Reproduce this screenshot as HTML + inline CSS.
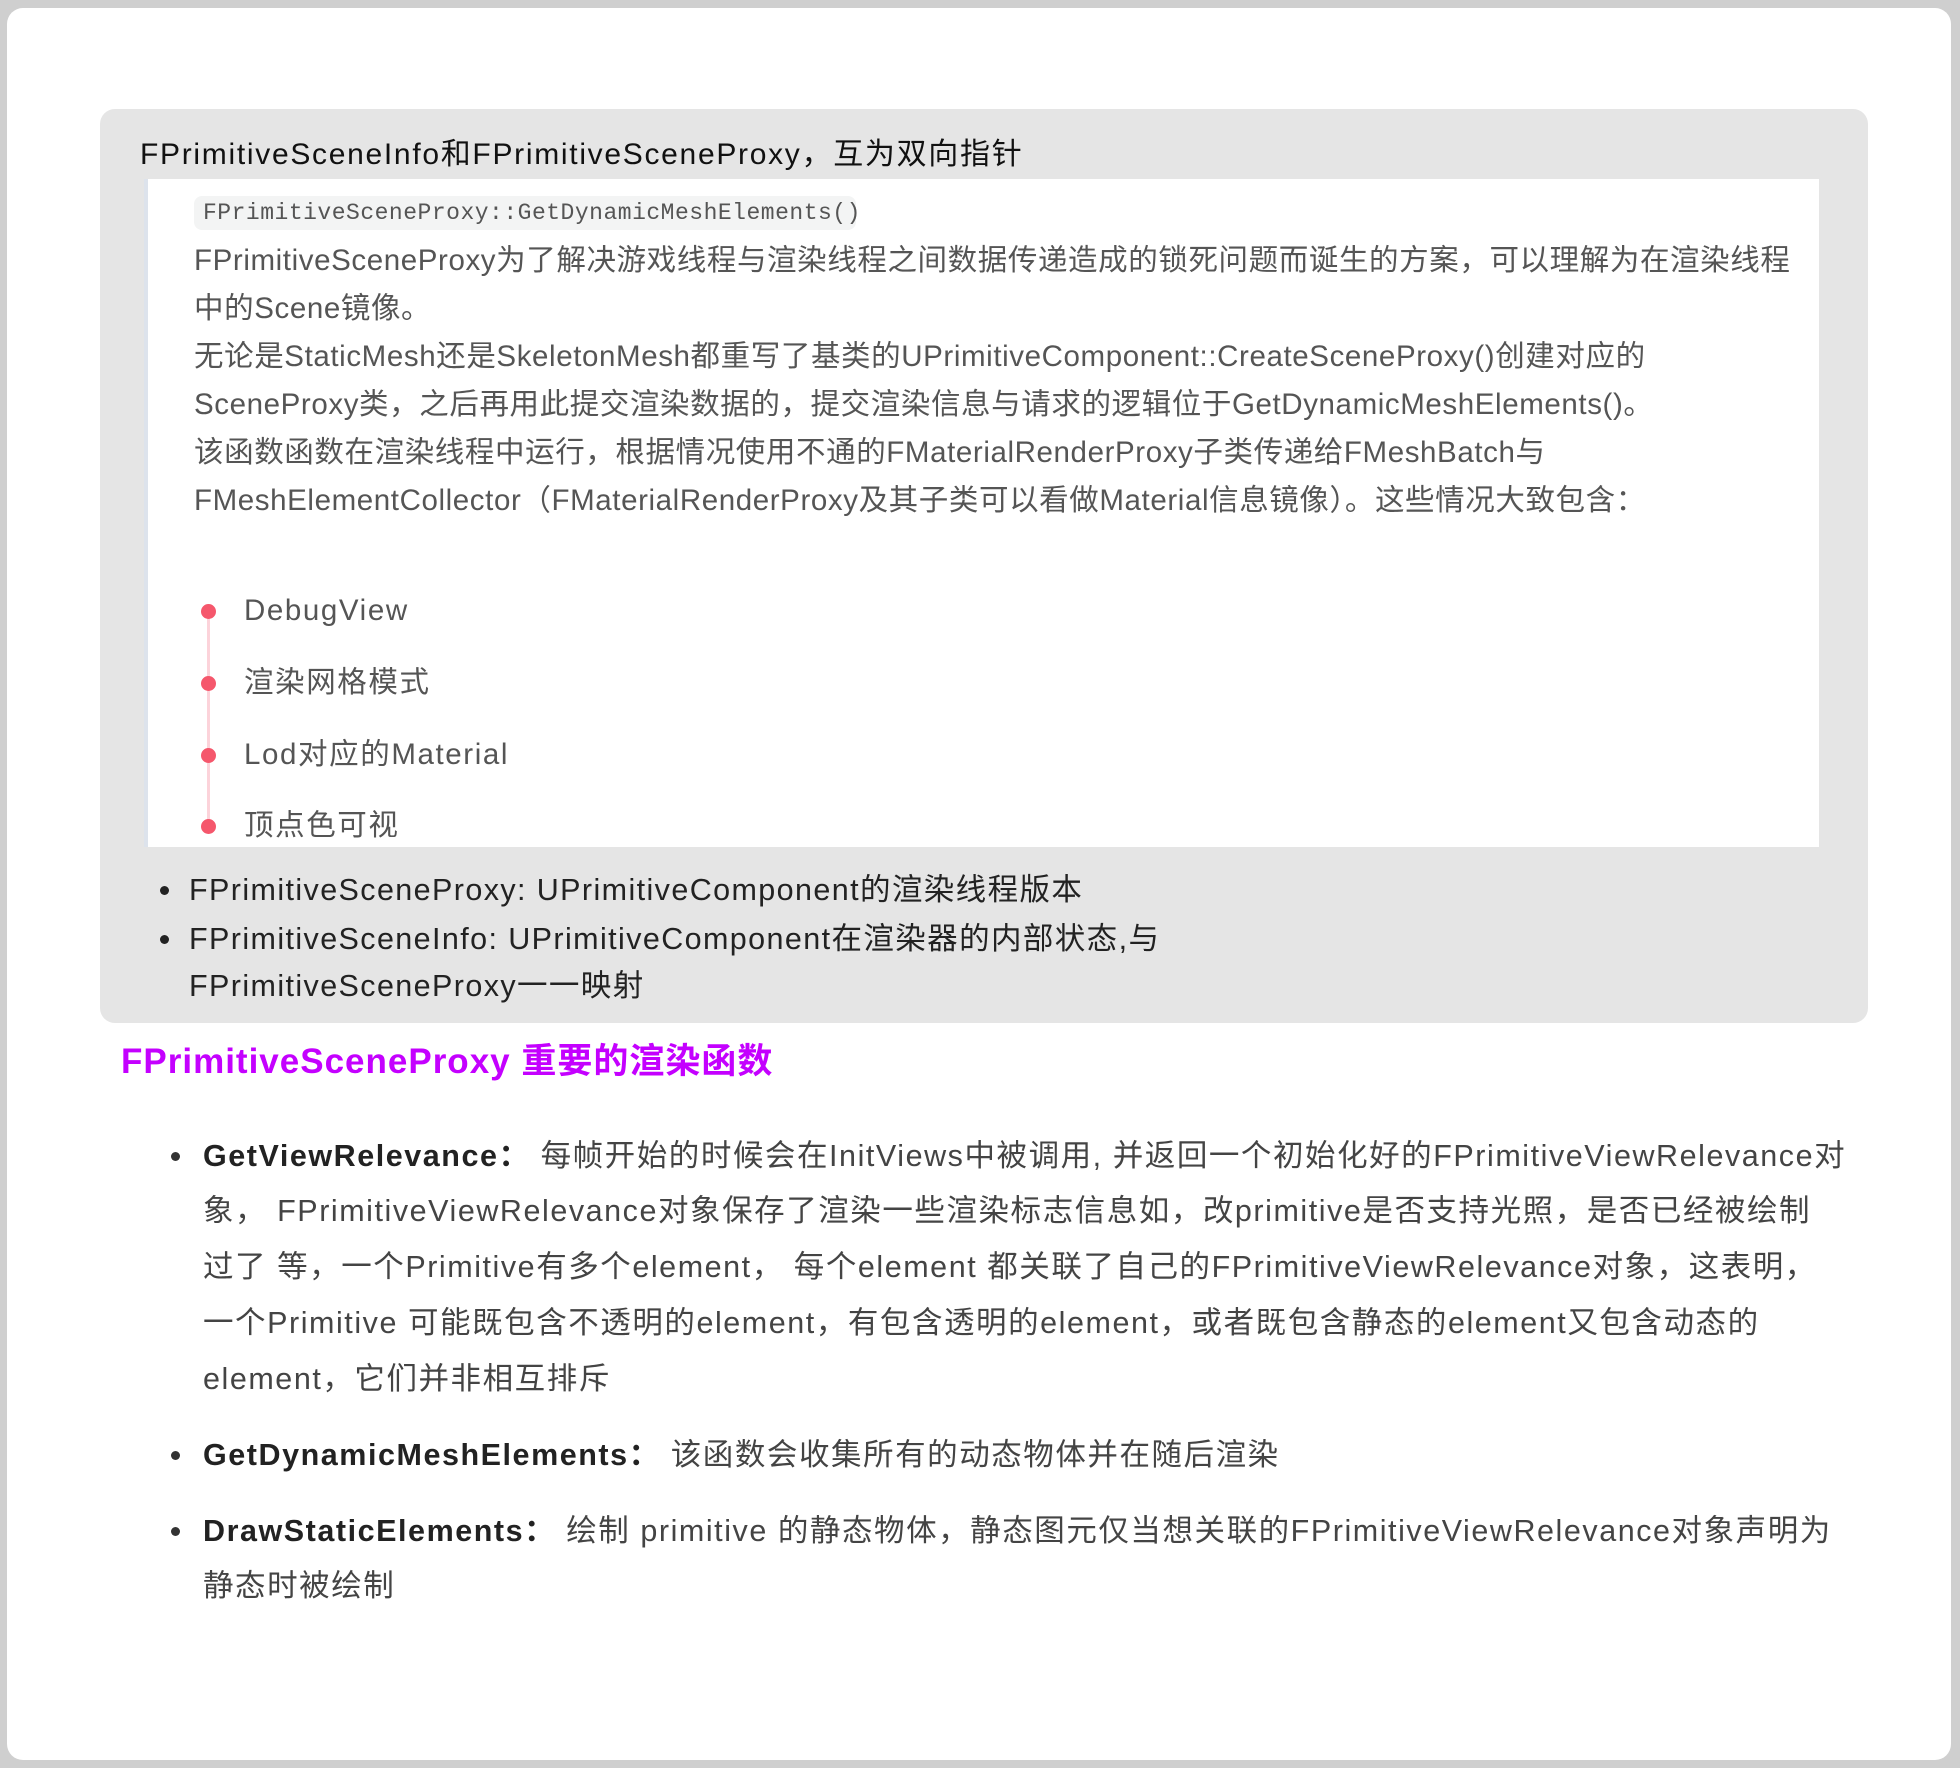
<!DOCTYPE html>
<html><head><meta charset="utf-8"><style>
html,body{margin:0;padding:0;}
body{width:1960px;height:1768px;background:#cfcfcf;position:relative;overflow:hidden;font-family:"Liberation Sans","Noto Sans CJK SC",sans-serif;}
.frame{position:absolute;left:7px;top:8px;width:1944px;height:1752px;background:#fff;border-radius:16px;}
.box{position:absolute;left:100px;top:109px;width:1768px;height:914px;background:#e5e5e5;border-radius:15px;}
.inner{position:absolute;left:144px;top:179px;width:1671px;height:668px;background:#fff;border-left:4px solid #dde3ec;}
.l{position:absolute;white-space:nowrap;}
.code{position:absolute;left:194px;top:196px;width:662px;height:34px;background:#f3f4f4;border-radius:8px;font-family:"Liberation Mono",monospace;font-size:23px;letter-spacing:0.5px;color:#555;line-height:34px;padding-left:9px;box-sizing:border-box;}
.p{font-size:29.5px;letter-spacing:0.6px;color:#555;line-height:48px;left:194px;}
.t{font-size:29.5px;letter-spacing:1.6px;color:#555;line-height:40px;left:244px;}
.dot{position:absolute;left:201px;width:15px;height:15px;border-radius:50%;background:#f5576c;}
.vline{position:absolute;left:207px;width:3px;background:#fcd3da;}
.b{font-size:30.5px;letter-spacing:1.4px;color:#222;line-height:44px;left:189px;}
.bd{position:absolute;left:160px;width:9px;height:9px;border-radius:50%;background:#222;}
.q{font-size:30.5px;letter-spacing:1.55px;color:#444;line-height:50px;left:203px;}
.q b{color:#222;}
.qd{position:absolute;left:171px;width:9px;height:9px;border-radius:50%;background:#333;}
</style></head><body>
<div class="frame"></div>
<div class="box"></div>
<div class="l" style="left:140px;top:135px;font-size:30px;letter-spacing:1.7px;line-height:40px;color:#111;">FPrimitiveSceneInfo和FPrimitiveSceneProxy，互为双向指针</div>
<div class="inner"></div>
<div class="code">FPrimitiveSceneProxy::GetDynamicMeshElements()</div>
<div class="l p" style="top:237px">FPrimitiveSceneProxy为了解决游戏线程与渲染线程之间数据传递造成的锁死问题而诞生的方案，可以理解为在渲染线程</div>
<div class="l p" style="top:285px">中的Scene镜像。</div>
<div class="l p" style="top:333px">无论是StaticMesh还是SkeletonMesh都重写了基类的UPrimitiveComponent::CreateSceneProxy()创建对应的</div>
<div class="l p" style="top:381px">SceneProxy类，之后再用此提交渲染数据的，提交渲染信息与请求的逻辑位于GetDynamicMeshElements()。</div>
<div class="l p" style="top:429px">该函数函数在渲染线程中运行，根据情况使用不通的FMaterialRenderProxy子类传递给FMeshBatch与</div>
<div class="l p" style="top:477px">FMeshElementCollector（FMaterialRenderProxy及其子类可以看做Material信息镜像）。这些情况大致包含：</div>

<div class="vline" style="top:618px;height:210px"></div>
<div class="dot" style="top:604px"></div>
<div class="dot" style="top:676px"></div>
<div class="dot" style="top:748px"></div>
<div class="dot" style="top:819px"></div>
<div class="l t" style="top:591px">DebugView</div>
<div class="l t" style="top:663px">渲染网格模式</div>
<div class="l t" style="top:735px">Lod对应的Material</div>
<div class="l t" style="top:806px">顶点色可视</div>

<div class="bd" style="top:886px"></div>
<div class="bd" style="top:935px"></div>
<div class="l b" style="top:868px">FPrimitiveSceneProxy: UPrimitiveComponent的渲染线程版本</div>
<div class="l b" style="top:917px">FPrimitiveSceneInfo: UPrimitiveComponent在渲染器的内部状态,与</div>
<div class="l b" style="top:964px">FPrimitiveSceneProxy一一映射</div>

<div class="l" style="left:121px;top:1040px;font-size:35px;letter-spacing:1px;line-height:44px;font-weight:bold;color:#c400ff;">FPrimitiveSceneProxy 重要的渲染函数</div>

<div class="qd" style="top:1152px"></div>
<div class="l q" style="top:1131px"><b>GetViewRelevance：</b> 每帧开始的时候会在InitViews中被调用, 并返回一个初始化好的FPrimitiveViewRelevance对</div>
<div class="l q" style="top:1186px">象， FPrimitiveViewRelevance对象保存了渲染一些渲染标志信息如，改primitive是否支持光照，是否已经被绘制</div>
<div class="l q" style="top:1242px">过了 等，一个Primitive有多个element， 每个element 都关联了自己的FPrimitiveViewRelevance对象，这表明，</div>
<div class="l q" style="top:1298px">一个Primitive 可能既包含不透明的element，有包含透明的element，或者既包含静态的element又包含动态的</div>
<div class="l q" style="top:1354px">element，它们并非相互排斥</div>
<div class="qd" style="top:1451px"></div>
<div class="l q" style="top:1430px"><b>GetDynamicMeshElements：</b> 该函数会收集所有的动态物体并在随后渲染</div>
<div class="qd" style="top:1527px"></div>
<div class="l q" style="top:1506px"><b>DrawStaticElements：</b> 绘制 primitive 的静态物体，静态图元仅当想关联的FPrimitiveViewRelevance对象声明为</div>
<div class="l q" style="top:1561px">静态时被绘制</div>
</body></html>
